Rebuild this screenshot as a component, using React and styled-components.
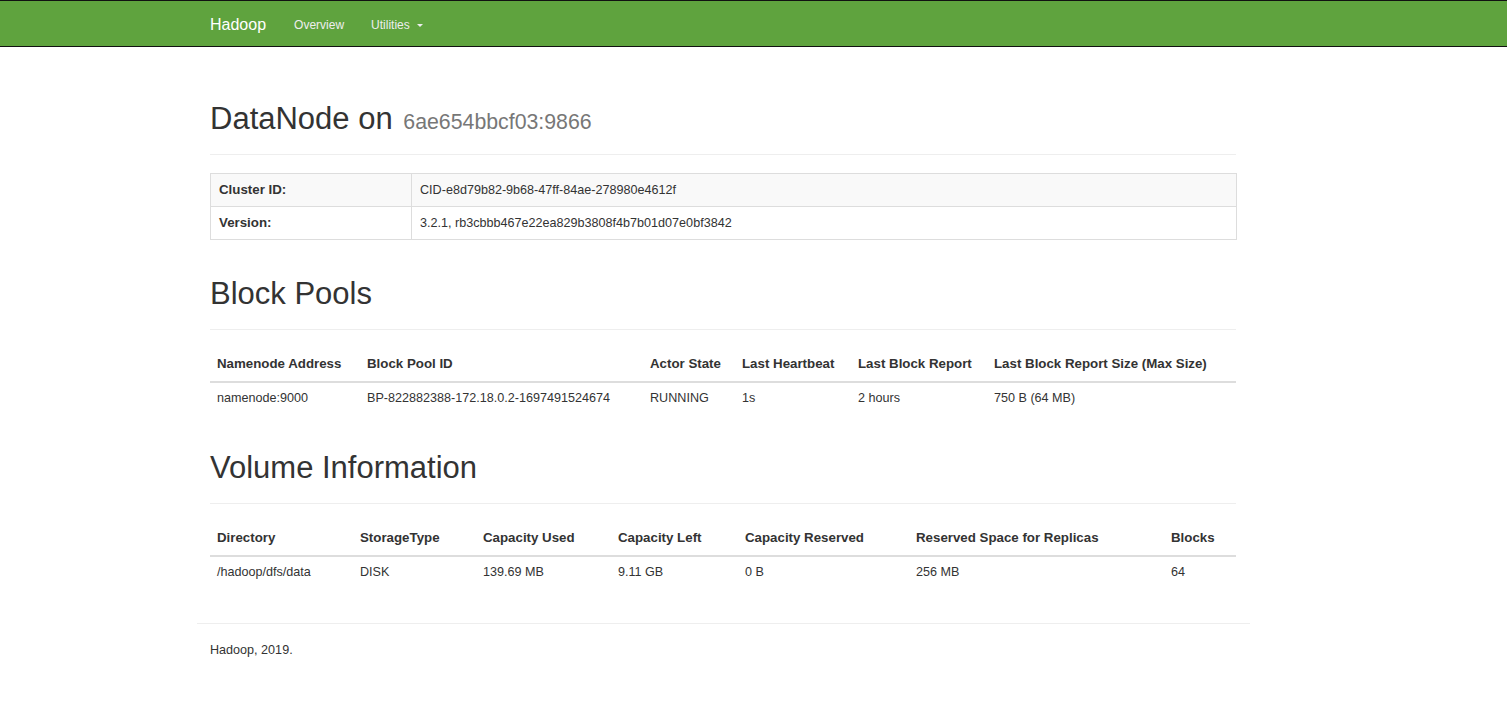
import React from "react";
import styled, { createGlobalStyle } from "styled-components";

const GlobalStyle = createGlobalStyle`
  html, body {
    margin: 0;
    padding: 0;
    background: #fff;
  }
  body {
    font-family: "Liberation Sans", Arial, sans-serif;
    font-size: 12.6px;
    line-height: 18px;
    color: #333;
  }
`;

const Navbar = styled.nav`
  height: 45px;
  background: #5fa33e;
  border-top: 1px solid #111;
  border-bottom: 1px solid #111;
`;

const NavInner = styled.div`
  width: 1026px;
  margin-left: 210px;
  height: 100%;
  padding-top: 3px;
  box-sizing: border-box;
  display: flex;
  align-items: center;
`;

const Brand = styled.div`
  font-size: 16px;
  color: #fff;
  padding-right: 15px;
`;

const NavLink = styled.a`
  font-size: 12px;
  color: #eee;
  padding: 0 14px 0 13px;
  text-decoration: none;
  display: flex;
  align-items: center;
`;

const Caret = styled.span`
  display: inline-block;
  margin-left: 7px;
  margin-top: 1px;
  border-top: 3px solid #eee;
  border-left: 3px solid transparent;
  border-right: 3px solid transparent;
`;

const Container = styled.main`
  width: 1026px;
  margin-left: 210px;
  padding-top: 55px;
`;

const PageHeader = styled.div`
  padding-bottom: 8px;
  border-bottom: 1px solid #eee;
  margin-top: ${(p) => p.$top || 0}px;
  margin-bottom: 18px;
`;

const Title = styled.h1`
  margin: 0 0 10px;
  font-weight: 400;
  font-size: 31px;
  line-height: 34px;
  color: #333;
`;

const Small = styled.small`
  font-size: 21.3px;
  line-height: 1;
  color: #777;
  margin-left: 2px;
`;

const Table = styled.table`
  width: 100%;
  table-layout: fixed;
  border-collapse: collapse;
  border: ${(p) => (p.$bordered ? "1px solid #ddd" : "none")};
`;

const Col = styled.col`
  width: ${(p) => p.$w}px;
`;

const Th = styled.th`
  text-align: left;
  font-weight: 700;
  font-size: 13.3px;
  padding: 7px 7px 8px;
  line-height: 18px;
  border-bottom: 2px solid #ddd;
  white-space: nowrap;
`;

const Td = styled.td`
  padding: ${(p) => (p.$bordered ? "7px 8px" : "6px 7px 8px")};
  line-height: 18px;
  white-space: nowrap;
  font-weight: ${(p) => (p.$bold ? 700 : 400)};
  font-size: ${(p) => (p.$bold ? 13.3 : 12.6)}px;
  border: ${(p) => (p.$bordered ? "1px solid #ddd" : "none")};
`;

const Tr = styled.tr`
  background: ${(p) => (p.$striped ? "#f9f9f9" : "transparent")};
`;

const FooterRule = styled.hr`
  border: 0;
  border-top: 1px solid #eee;
  margin: 34px -14px 17px -13px;
`;

const FooterText = styled.p`
  margin: 0;
  padding-bottom: 40px;
`;

const blockCols = [150, 283, 92, 116, 136, 249];
const blockHead = [
  "Namenode Address",
  "Block Pool ID",
  "Actor State",
  "Last Heartbeat",
  "Last Block Report",
  "Last Block Report Size (Max Size)",
];
const blockRow = [
  "namenode:9000",
  "BP-822882388-172.18.0.2-1697491524674",
  "RUNNING",
  "1s",
  "2 hours",
  "750 B (64 MB)",
];

const volCols = [143, 123, 135, 127, 171, 255, 72];
const volHead = [
  "Directory",
  "StorageType",
  "Capacity Used",
  "Capacity Left",
  "Capacity Reserved",
  "Reserved Space for Replicas",
  "Blocks",
];
const volRow = ["/hadoop/dfs/data", "DISK", "139.69 MB", "9.11 GB", "0 B", "256 MB", "64"];

function DataTable({ cols, head, row }) {
  return (
    <Table>
      <colgroup>
        {cols.map((w, i) => (
          <Col key={i} $w={w} />
        ))}
      </colgroup>
      <thead>
        <tr>
          {head.map((h) => (
            <Th key={h}>{h}</Th>
          ))}
        </tr>
      </thead>
      <tbody>
        <tr>
          {row.map((c, i) => (
            <Td key={i}>{c}</Td>
          ))}
        </tr>
      </tbody>
    </Table>
  );
}

export default function App() {
  return (
    <>
      <GlobalStyle />
      <Navbar>
        <NavInner>
          <Brand>Hadoop</Brand>
          <NavLink>Overview</NavLink>
          <NavLink>
            Utilities <Caret />
          </NavLink>
        </NavInner>
      </Navbar>
      <Container>
        <PageHeader>
          <Title>
            DataNode on <Small>6ae654bbcf03:9866</Small>
          </Title>
        </PageHeader>
        <Table $bordered>
          <colgroup>
            <Col $w={201} />
            <Col $w={825} />
          </colgroup>
          <tbody>
            <Tr $striped>
              <Td $bordered $bold>Cluster ID:</Td>
              <Td $bordered>CID-e8d79b82-9b68-47ff-84ae-278980e4612f</Td>
            </Tr>
            <Tr>
              <Td $bordered $bold>Version:</Td>
              <Td $bordered>3.2.1, rb3cbbb467e22ea829b3808f4b7b01d07e0bf3842</Td>
            </Tr>
          </tbody>
        </Table>

        <PageHeader $top={37}>
          <Title>Block Pools</Title>
        </PageHeader>
        <DataTable cols={blockCols} head={blockHead} row={blockRow} />

        <PageHeader $top={36}>
          <Title>Volume Information</Title>
        </PageHeader>
        <DataTable cols={volCols} head={volHead} row={volRow} />

        <FooterRule />
        <FooterText>Hadoop, 2019.</FooterText>
      </Container>
    </>
  );
}
